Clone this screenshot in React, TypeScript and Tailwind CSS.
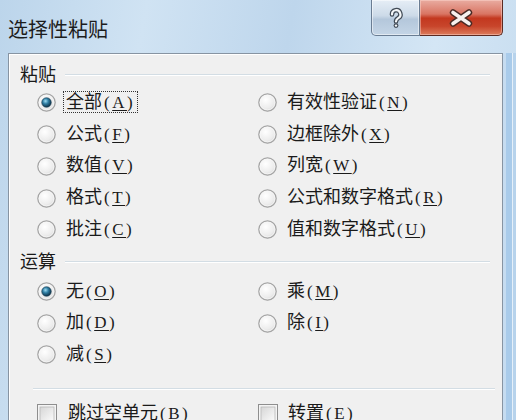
import React from 'react';

const textFont = "font-['Liberation_Serif','Noto_Sans_CJK_SC',serif]";

function Radio({ checked }: { checked?: boolean }) {
  return (
    <svg width="19" height="19" viewBox="0 0 19 19" className="shrink-0">
      <defs>
        <radialGradient id="rbg" cx="40%" cy="35%" r="70%">
          <stop offset="0%" stopColor="#ffffff" />
          <stop offset="70%" stopColor="#ececec" />
          <stop offset="100%" stopColor="#cfcfcf" />
        </radialGradient>
        <radialGradient id="rdot" cx="40%" cy="35%" r="65%">
          <stop offset="0%" stopColor="#9fdcf2" />
          <stop offset="45%" stopColor="#2f7ea3" />
          <stop offset="100%" stopColor="#0c2f45" />
        </radialGradient>
      </defs>
      <circle cx="9.5" cy="9.5" r="8.7" fill="url(#rbg)" stroke="#a2a2a2" strokeWidth="1.2" />
      <circle cx="9.5" cy="9.5" r="7.3" fill="none" stroke="#f6f6f6" strokeWidth="0.8" />
      {checked && <circle cx="9.5" cy="9.5" r="4.8" fill="url(#rdot)" stroke="#1d3e52" strokeWidth="0.6" />}
    </svg>
  );
}

function Checkbox() {
  return (
    <svg width="20" height="20" viewBox="0 0 20 20" className="shrink-0">
      <defs>
        <linearGradient id="cbg" x1="0" y1="0" x2="1" y2="1">
          <stop offset="0%" stopColor="#d6d6d6" />
          <stop offset="100%" stopColor="#fbfbfb" />
        </linearGradient>
      </defs>
      <rect x="0.5" y="0.5" width="19" height="19" fill="#f4f4f4" stroke="#8e8e8e" />
      <rect x="3" y="3" width="14" height="14" fill="url(#cbg)" stroke="#b8b8b8" strokeWidth="0.8" />
    </svg>
  );
}

function Label({ text, k, focus }: { text: string; k: string; focus?: boolean }) {
  return (
    <span
      className={`px-[2px] text-[18px] leading-[20px] text-[#1a1a1a] border border-dotted ${
        focus ? 'border-[#333]' : 'border-transparent'
      }`}
    >
      {text}
      <span className="ml-[2px] tracking-[2.5px] text-[17px]">
        (<span className="underline underline-offset-[2px]">{k}</span>)
      </span>
    </span>
  );
}

function Opt({ text, k, checked, focus }: { text: string; k: string; checked?: boolean; focus?: boolean }) {
  return (
    <div className="flex items-center">
      <Radio checked={checked} />
      <span className="ml-[7px]">
        <Label text={text} k={k} focus={focus} />
      </span>
    </div>
  );
}

function GroupHead({ title }: { title: string }) {
  return (
    <div className="flex items-center h-6 pl-[11px]">
      <span className="text-[18px] leading-6 text-[#1a1a1a]">{title}</span>
      <div className="ml-[9px] w-[425px] h-[2px] border-t border-[#d3dde4] border-b border-b-white" />
    </div>
  );
}

export default function App() {
  const paste = [
    ['全部', 'A', '有效性验证', 'N'],
    ['公式', 'F', '边框除外', 'X'],
    ['数值', 'V', '列宽', 'W'],
    ['格式', 'T', '公式和数字格式', 'R'],
    ['批注', 'C', '值和数字格式', 'U'],
  ];
  const ops: [string, string][] = [
    ['无', 'O'],
    ['乘', 'M'],
    ['加', 'D'],
    ['除', 'I'],
    ['减', 'S'],
  ];

  return (
    <div
      className={`w-[516px] h-[420px] overflow-hidden flex flex-col ${textFont} bg-[linear-gradient(100deg,#bcd5eb_0%,#d0e3f3_25%,#bed6ec_50%,#d4e6f5_75%,#c3daee_100%)]`}
    >
      {/* Title bar */}
      <div className="h-[53px] shrink-0 flex justify-between items-start">
        <div className="pl-2 pt-[15px] text-[20px] leading-[28px] text-[#1c1c1c] font-['Noto_Sans_CJK_SC',sans-serif]">
          选择性粘贴
        </div>
        <div className="flex mr-[13px]">
          <div className="w-[49px] h-[36px] flex items-center justify-center border border-t-0 border-[#6a7d93] rounded-bl-[5px] bg-[linear-gradient(#e6eef6,#ccdae8_45%,#b4c7db_55%,#c4d5e6)] shadow-[inset_0_0_0_1px_rgba(255,255,255,0.5)]">
            <svg width="18" height="22" viewBox="-9 -11 18 22">
              <path d="M-4,-3.5 a4.2,4.2 0 1 1 6.2,3.6 c-1.6,1 -2.2,1.6 -2.2,3.4" fill="none" stroke="#404a55" strokeWidth="4.6" strokeLinecap="round" />
              <circle cx="0" cy="7.6" r="2.4" fill="#404a55" />
              <path d="M-4,-3.5 a4.2,4.2 0 1 1 6.2,3.6 c-1.6,1 -2.2,1.6 -2.2,3.4" fill="none" stroke="#f4f6f8" strokeWidth="2.2" strokeLinecap="round" />
              <circle cx="0" cy="7.6" r="1.2" fill="#f4f6f8" />
            </svg>
          </div>
          <div className="w-[83px] h-[36px] flex items-center justify-center border border-t-0 border-l-0 border-[#5b2a22] rounded-br-[5px] bg-[linear-gradient(#e9aca1,#d97563_40%,#c3381f_52%,#c8452b_75%,#dc7c5c)] shadow-[inset_0_0_0_1px_rgba(255,220,210,0.45)]">
            <svg width="26" height="18" viewBox="-13 -9 26 18">
              <path d="M-8,-5.5 L8,5.5 M-8,5.5 L8,-5.5" stroke="#4a2a24" strokeWidth="6.4" strokeLinecap="round" />
              <path d="M-8,-5.5 L8,5.5 M-8,5.5 L8,-5.5" stroke="#f7f1ee" strokeWidth="3.6" strokeLinecap="round" />
            </svg>
          </div>
        </div>
      </div>

      {/* Body row: left frame, panel, right frame */}
      <div className="flex flex-1">
        <div className="w-[8px]" />
        <div className="w-[495px] h-[400px] bg-[#f0f0f0] border border-[#8794a2] shadow-[inset_1px_1px_0_#ffffff]">
          <div className="pt-[9px]">
            <GroupHead title="粘贴" />
            <div className="grid grid-cols-[221px_1fr] pl-[28px] auto-rows-[31.75px]">
              {paste.map((r, i) => (
                <React.Fragment key={i}>
                  <Opt text={r[0]} k={r[1]} checked={i === 0} focus={i === 0} />
                  <Opt text={r[2]} k={r[3]} />
                </React.Fragment>
              ))}
            </div>

            <div className="mt-[4px]">
              <GroupHead title="运算" />
            </div>
            <div className="mt-[2px] grid grid-cols-[221px_1fr] pl-[28px] auto-rows-[31.5px]">
              {ops.map(([t, k], i) => (
                <Opt key={k} text={t} k={k} checked={i === 0} />
              ))}
            </div>

            <div className="mt-[18px] ml-[24px] w-[462px] h-[2px] border-t border-[#d3dde4] border-b border-b-white" />

            <div className="mt-[12px] h-6 grid grid-cols-[221px_1fr] pl-[28px]">
              <div className="flex items-center">
                <Checkbox />
                <span className="ml-[8px]">
                  <Label text="跳过空单元" k="B" />
                </span>
              </div>
              <div className="flex items-center">
                <Checkbox />
                <span className="ml-[7px]">
                  <Label text="转置" k="E" />
                </span>
              </div>
            </div>
          </div>
        </div>
        <div className="flex-1 flex">
          <div className="w-[3px] bg-[#c6dcf0]" />
          <div className="w-[6px] bg-[#a9cbea]" />
          <div className="w-[1px] bg-[#e6f0f9]" />
          <div className="flex-1 bg-[#b7d3ec]" />
        </div>
      </div>
    </div>
  );
}
